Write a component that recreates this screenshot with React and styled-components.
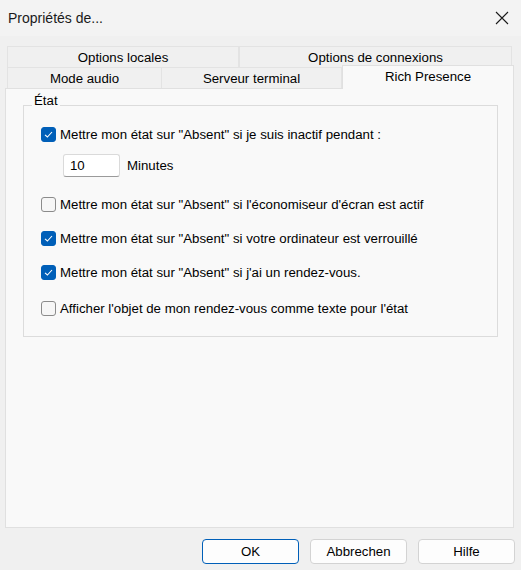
import React from "react"
import styled, { createGlobalStyle } from "styled-components"

const GlobalStyle = createGlobalStyle`
  html, body {
    margin: 0;
    padding: 0;
    background: #f0f0f0;
  }
  * {
    box-sizing: border-box;
  }
`

const options = [
  { label: "Mettre mon état sur \"Absent\" si l'économiseur d'écran est actif", checked: false, gap: 17 },
  { label: "Mettre mon état sur \"Absent\" si votre ordinateur est verrouillé", checked: true, gap: 14 },
  { label: "Mettre mon état sur \"Absent\" si j'ai un rendez-vous.", checked: true, gap: 14 },
  { label: "Afficher l'objet de mon rendez-vous comme texte pour l'état", checked: false, gap: 16 },
]

const Check = ({ checked }) => (
  <Box checked={checked}>
    {checked && (
      <svg width="11" height="11" viewBox="0 0 11 11">
        <path d="M2 5.8 L4.4 8 L9 3" fill="none" stroke="#fff" strokeWidth="1.1" />
      </svg>
    )}
  </Box>
)

export default function App() {
  return (
    <Window>
      <GlobalStyle />
      <TitleBar>
        <Title>Propriétés de...</Title>
        <Close>
          <svg width="14" height="14" viewBox="0 0 14 14">
            <path d="M1 1 L13 13 M13 1 L1 13" stroke="#1a1a1a" strokeWidth="1.1" />
          </svg>
        </Close>
      </TitleBar>
      <Body>
        <Tabs>
          <TabRow>
            <Tab width={232}>Options locales</Tab>
            <Tab width={273}>Options de connexions</Tab>
          </TabRow>
          <TabRow>
            <Tab width={155} low>Mode audio</Tab>
            <Tab width={180} low>Serveur terminal</Tab>
            <ActiveTab>Rich Presence</ActiveTab>
          </TabRow>
        </Tabs>
        <Panel>
          <Group>
            <Legend>État</Legend>
            <Content>
              <Row>
                <Check checked />
                <Label>Mettre mon état sur "Absent" si je suis inactif pendant :</Label>
              </Row>
              <InputRow>
                <Field>10</Field>
                <Label>Minutes</Label>
              </InputRow>
              {options.map((o, i) => (
                <Row key={i} style={{ marginTop: o.gap }}>
                  <Check checked={o.checked} />
                  <Label>{o.label}</Label>
                </Row>
              ))}
            </Content>
          </Group>
        </Panel>
        <Buttons>
          <Button primary>OK</Button>
          <Button>Abbrechen</Button>
          <Button>Hilfe</Button>
        </Buttons>
      </Body>
    </Window>
  )
}

const Window = styled.div`
  width: 521px;
  height: 570px;
  display: flex;
  flex-direction: column;
  font-family: "Liberation Sans", Arial, sans-serif;
  font-size: 13.25px;
  color: #000;
  overflow: hidden;
`
const TitleBar = styled.div`
  height: 36px;
  background: #f3f3f3;
  display: flex;
  align-items: center;
  justify-content: space-between;
  padding: 0 12px 0 8px;
`
const Title = styled.div`
  font-size: 14px;
  color: #1a1a1a;
`
const Close = styled.div`
  width: 14px;
  height: 14px;
  display: flex;
`
const Body = styled.div`
  flex: 1;
  display: flex;
  flex-direction: column;
  padding: 10px 7px 0 5px;
`
const Tabs = styled.div`
  display: flex;
  flex-direction: column;
  padding-left: 2px;
  position: relative;
  z-index: 1;
`
const TabRow = styled.div`
  display: flex;
  align-items: flex-end;
  height: 21px;
`
const Tab = styled.div`
  width: ${p => p.width}px;
  height: 21px;
  border: 1px solid #e3e3e3;
  border-left-width: ${p => (p.low ? 0 : 1)}px;
  border-bottom: none;
  &:first-child {
    border-left-width: 1px;
  }
  background: #f0f0f0;
  display: flex;
  align-items: center;
  justify-content: center;
  padding-top: 1px;
`
const ActiveTab = styled.div`
  width: 172px;
  height: 24px;
  margin-bottom: -1px;
  border: 1px solid #e0e0e0;
  border-bottom: none;
  background: #f9f9f9;
  display: flex;
  justify-content: center;
  padding-top: 3px;
`
const Panel = styled.div`
  height: 440px;
  border: 1px solid #e0e0e0;
  background: #f9f9f9;
  padding: 0 15px 0 17px;
`
const Group = styled.fieldset`
  margin: 4px 0 0 0;
  padding: 7px 0 18px 0;
  border: 1px solid #dcdcdc;
  min-width: 0;
`
const Legend = styled.legend`
  margin-left: 8px;
  padding: 0 2px 8px 2px;
  line-height: 16px;
`
const Content = styled.div`
  display: flex;
  flex-direction: column;
  padding-left: 17px;
`
const Row = styled.div`
  display: flex;
  align-items: center;
  height: 20px;
  gap: 4px;
`
const Box = styled.div`
  width: 15px;
  height: 15px;
  border-radius: 3px;
  flex-shrink: 0;
  display: flex;
  align-items: center;
  justify-content: center;
  background: ${p => (p.checked ? "#005fb8" : "#f6f6f6")};
  border: 1px solid ${p => (p.checked ? "#005fb8" : "#8b8b8b")};
`
const Label = styled.span`
  white-space: nowrap;
`
const InputRow = styled.div`
  display: flex;
  align-items: center;
  gap: 7px;
  margin: 10px 0 0 22px;
`
const Field = styled.div`
  width: 57px;
  height: 23px;
  background: #fff;
  border: 1px solid #dadada;
  border-bottom-color: #9a9a9a;
  border-radius: 3px;
  padding: 3px 0 0 6px;
`
const Buttons = styled.div`
  display: flex;
  justify-content: flex-end;
  gap: 11px;
  margin-top: 11px;
  margin-right: -1px;
`
const Button = styled.div`
  width: 97px;
  height: 25px;
  border-radius: 4px;
  background: #fdfdfd;
  border: 1px solid ${p => (p.primary ? "#005fb8" : "#d3d3d3")};
  display: flex;
  align-items: center;
  justify-content: center;
`
